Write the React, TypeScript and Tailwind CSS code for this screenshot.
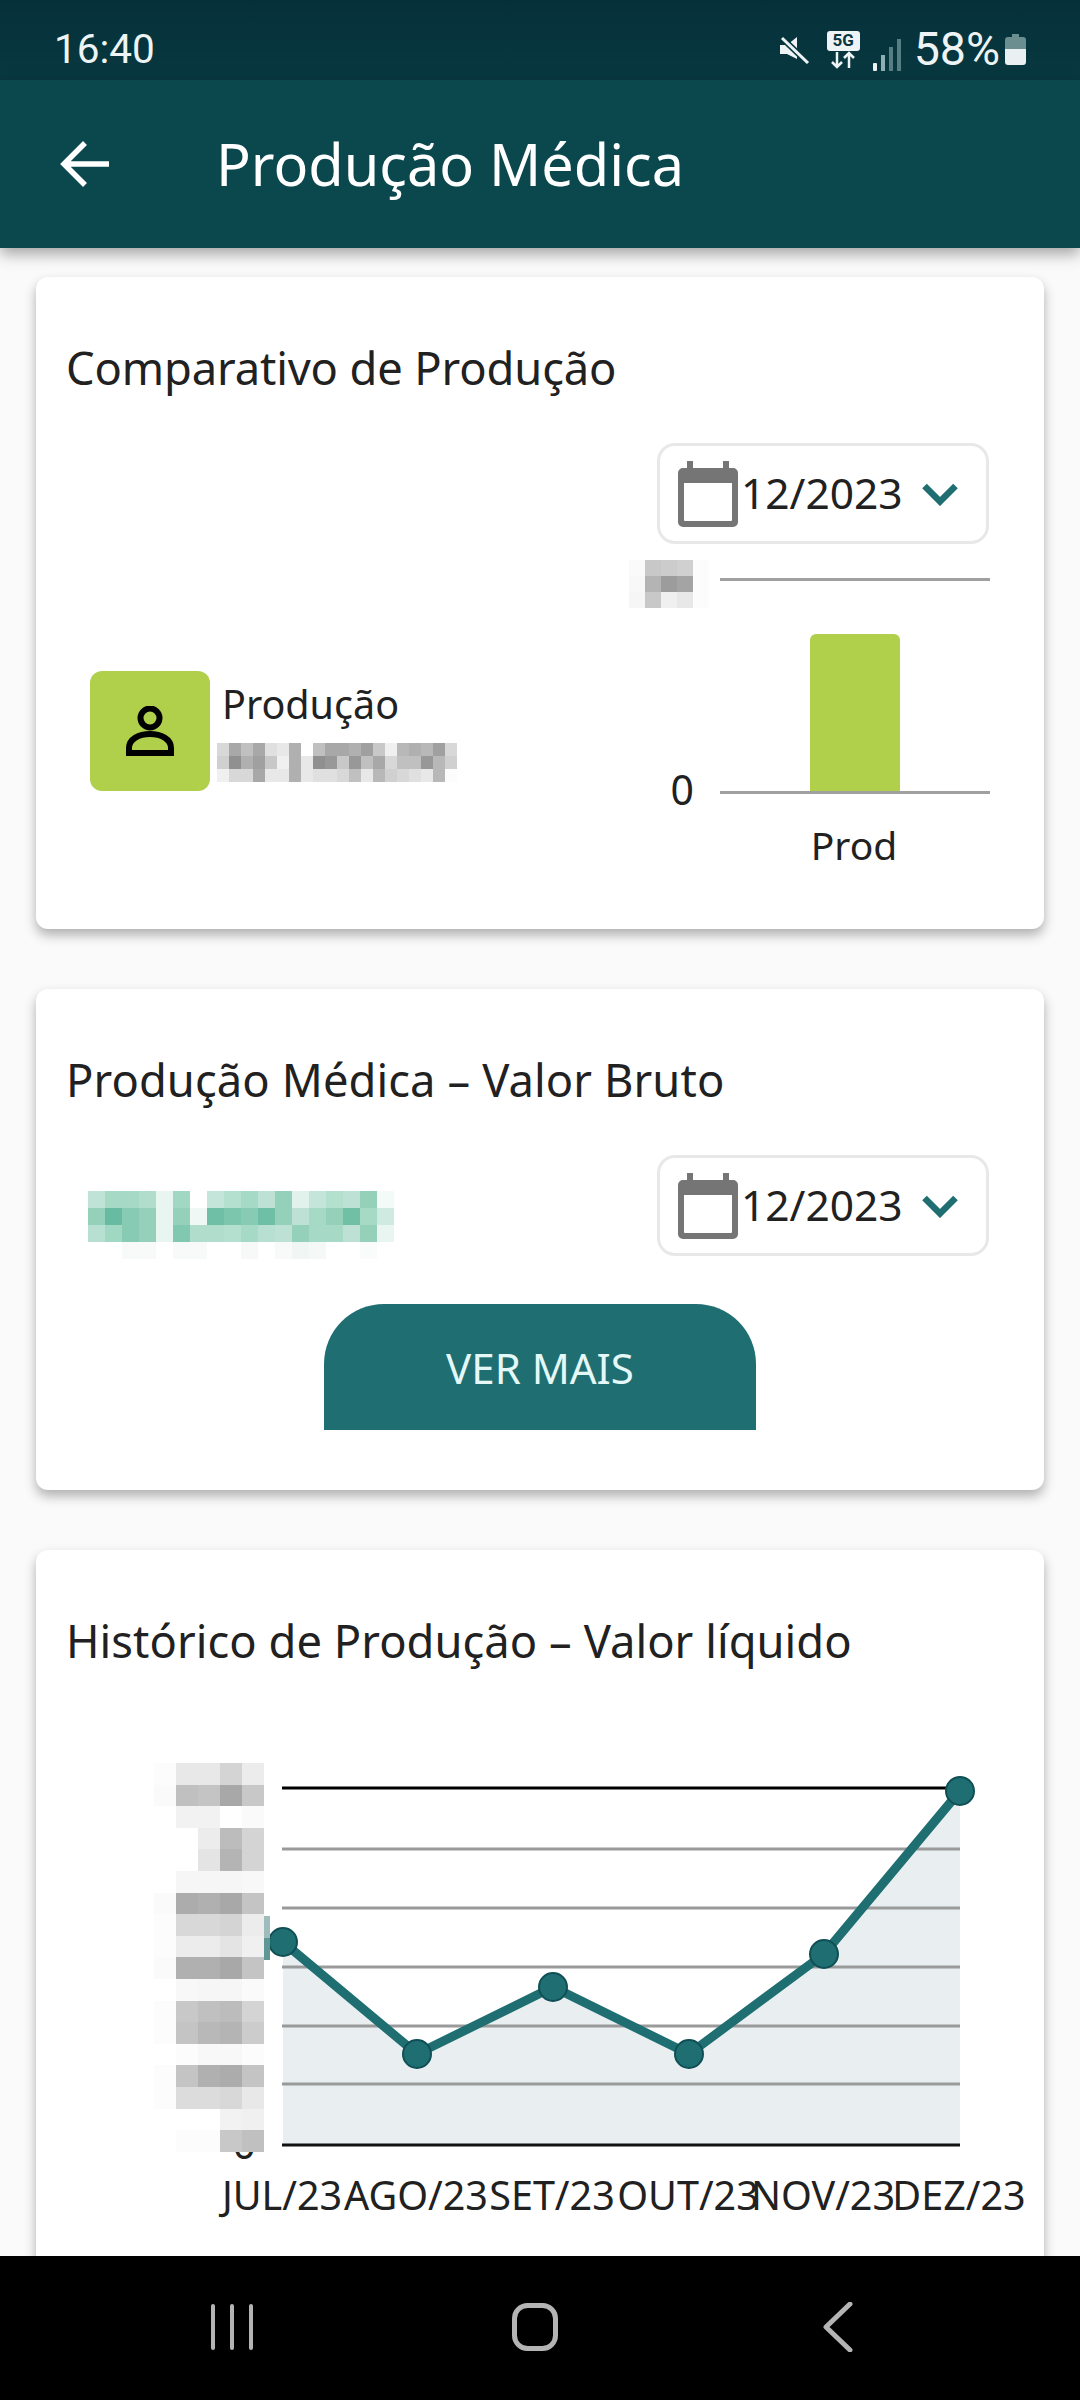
import React from "react";

const font = { fontFamily: '"Noto Sans", "Open Sans", sans-serif' };

function Mosaic({ rows, w, h, className }: { rows: string[][]; w: number; h: number; className?: string }) {
  const cols = Math.max(...rows.map((r) => r.length));
  return (
    <svg width={cols * w} height={rows.length * h} shapeRendering="crispEdges" className={className}>
      {rows.map((r, y) =>
        r.map((c, x) => <rect key={x + "-" + y} x={x * w} y={y * h} width={w} height={h + 0.5} fill={"#" + c} />)
      )}
    </svg>
  );
}

const g = (s: string) =>
  s.split("|").map((row) =>
    row.split(",").map((v) => (v.length === 2 ? v + v + v : v))
  );

const grayRows = g(
  "d8,a8,c0,a8,e0,e8,b0,ff,c0,a8,a8,b0,a0,c8,f0,b8,b0,b8,a0,d8|d0,90,b0,a0,c8,f0,b0,e8,90,98,c8,98,c0,a8,d8,c0,c0,98,b8,d0|f0,d8,d8,a8,e8,e8,b0,e8,e0,e0,d8,c0,e8,b8,d0,d8,e0,e8,b8,fc"
);
const smallRows = g("fa,c8,cc,d0,fc|f8,b4,9c,a4,fc|f6,c8,f0,e8,fc");
const chartRows = g(
  "fc,e8,e8,d4,ec|fa,c0,c4,a8,c8|ff,f2,f2,ff,fa|ff,ff,ec,bc,d4|ff,ff,e4,b4,d4|ff,f6,f6,f6,f8|fa,ac,b0,a8,c4|fc,d8,d8,d4,ec|fc,ec,ec,e4,f0|fa,b0,b0,a8,c4|ff,f8,f6,f6,fa|fc,c8,c0,bc,d4|fc,c4,b8,b4,cc|ff,fc,f8,f8,fc|fc,c4,b0,ac,c4|fc,dc,dc,d8,e8|ff,ff,ff,f2,f0|ff,fc,fc,c8,c0"
);
const greenRows = g(
  "bfe3d6,a6d9c6,a6d9c6,b0ddcc,e8f5f0,a0d8c4,ffffff,c4e6da,b4e0d0,a6d9c6,bde2d5,94d0ba,e0f2eb,c4e6da,b4e0d0,bde2d5,94d0ba,f4faf8|94d0ba,66bba0,88cbb4,94d0ba,e8f5f0,94d0ba,f0f8f5,6ebfa5,7cc6ae,88cbb4,6ebfa5,94d0ba,bde2d5,a6d9c6,94d0ba,70c0a6,a6d9c6,cfeae0|b8e0d2,a0d8c4,88cbb4,94d0ba,e8f5f0,80c8b0,b0ddcc,b0ddcc,b4e0d0,a6d9c6,b8e0d2,bde2d5,94d0ba,a6d9c6,a6d9c6,bde2d5,94d0ba,e8f5f0|ffffff,ffffff,f8fafa,f8fafa,ffffff,f8fafa,f8fafa,ffffff,ffffff,f6f9f8,ffffff,f8fafa,f0f6f3,f4f8f6,ffffff,ffffff,fafbfb,ffffff"
);

function CalendarIcon() {
  return (
    <svg width="60" height="66" viewBox="0 0 60 66" className="shrink-0">
      <path
        fillRule="evenodd"
        fill="#757575"
        d="M9 0h6v7h30V0h6v7h4a5 5 0 0 1 5 5v49a5 5 0 0 1-5 5H5a5 5 0 0 1-5-5V12a5 5 0 0 1 5-5h4zM6 22v37a1 1 0 0 0 1 1h46a1 1 0 0 0 1-1V22z"
      />
    </svg>
  );
}

function DateBox() {
  return (
    <div className="flex h-[101px] w-[332px] items-center rounded-[18px] border-[3px] border-[#e8e8e8] bg-white pl-[18px]">
      <CalendarIcon />
      <span className="ml-[3px] text-[42.500px] leading-none text-[#212121]">12/2023</span>
      <svg width="36" height="24" viewBox="0 0 36 24" className="ml-[19px] shrink-0">
        <path d="M2.500 4L18 19.500 33.500 4" fill="none" stroke="#1f6e72" strokeWidth="6.500" />
      </svg>
    </div>
  );
}

function Card({
  title,
  className,
  titleClass,
  children,
}: {
  title: string;
  className: string;
  titleClass: string;
  children: React.ReactNode;
}) {
  return (
    <section
      className={
        "mx-[36px] shrink-0 rounded-[12px] bg-white pt-[59px] shadow-[0_6px_12px_rgba(0,0,0,0.3)] " + className
      }
    >
      <h2 className={"pl-[30px] text-[45.300px] leading-[64px] text-[#212121] " + titleClass}>{title}</h2>
      {children}
    </section>
  );
}

function StatusBar() {
  return (
    <div className="flex h-[80px] shrink-0 items-center bg-gradient-to-b from-[#05303a] to-[#083840] pl-[54px] pr-[54px] pt-[19px] text-[#eef4f5]">
      <span className="text-[40.500px] leading-none" style={{ fontFamily: "Roboto, sans-serif" }}>
        16:40
      </span>
      <div className="ml-auto flex items-center">
        <svg width="32" height="28" viewBox="0 0 32 28">
          <path d="M1 9h7l10-8v22L8 18H1z" fill="#eef4f5" />
          <path d="M3 2l26 25" stroke="#08363f" strokeWidth="6" />
          <path d="M3 2l26 25" stroke="#eef4f5" strokeWidth="3" />
        </svg>
        <div className="ml-[16px] flex w-[33px] flex-col items-center">
          <div
            className="flex h-[20px] w-[33px] items-center justify-center rounded-[3px] bg-[#eef4f5] text-[17px] font-bold leading-none text-[#08363f]"
            style={{ fontFamily: "Roboto, sans-serif" }}
          >
            5G
          </div>
          <svg width="26" height="18" viewBox="0 0 26 18">
            <path d="M7 1v15M2 11l5 5 5-5M19 17V2M14 7l5-5 5 5" fill="none" stroke="#eef4f5" strokeWidth="2.500" />
          </svg>
        </div>
        <svg width="28" height="32" viewBox="0 0 28 32" className="ml-[13px] self-end mb-[2px]">
          <rect x="0" y="24" width="4" height="8" rx="1" fill="#eef4f5" />
          <rect x="8" y="16" width="4" height="16" fill="#8fb0b2" />
          <rect x="16" y="8" width="4" height="24" fill="#557f82" />
          <rect x="24" y="0" width="4" height="32" fill="#557f82" />
        </svg>
        <span className="ml-[13px] text-[46.500px] leading-none" style={{ fontFamily: "Roboto, sans-serif" }}>
          58%
        </span>
        <svg width="21" height="31" viewBox="0 0 21 31" className="ml-[5px]">
          <path d="M7 0h7v3h4a3 3 0 0 1 3 3v9H0V6a3 3 0 0 1 3-3h4z" fill="#6b8f90" />
          <path d="M0 15h21v13a3 3 0 0 1-3 3H3a3 3 0 0 1-3-3z" fill="#eaf0f2" />
        </svg>
      </div>
    </div>
  );
}

function Header() {
  return (
    <header className="relative z-10 flex h-[168px] shrink-0 items-center bg-[#0b484e] pl-[60px] shadow-[0_6px_14px_rgba(0,0,0,0.35)]">
      <svg width="50" height="46" viewBox="0 0 50 46">
        <path d="M49 23H4M25 2L4 23l21 21" fill="none" stroke="#ffffff" strokeWidth="5.500" />
      </svg>
      <h1 className="ml-[106px] text-[57.600px] leading-none text-white">Produção Médica</h1>
    </header>
  );
}

function PersonIcon() {
  return (
    <svg width="48" height="50" viewBox="0 0 48 50">
      <circle cx="24" cy="12" r="9.500" fill="none" stroke="#000" strokeWidth="6" />
      <path d="M3 47v-5C3 33 13 28 24 28s21 5 21 14v5z" fill="none" stroke="#000" strokeWidth="6" />
    </svg>
  );
}

function BarChart() {
  return (
    <div className="relative -mr-[1px] mt-[11px] h-[320px] w-[346px]">
      <svg width="346" height="320" className="block">
        <path d="M76 24.500h270M76 237.500h270" stroke="#a0a0a0" strokeWidth="3" />
        <path d="M166 236V85a6 6 0 0 1 6-6h78a6 6 0 0 1 6 6v151z" fill="#b0d04c" />
        <text x="50" y="250" textAnchor="end" fontSize="41" fill="#212121">
          0
        </text>
        <text x="210" y="305" textAnchor="middle" fontSize="39" fill="#212121">
          Prod
        </text>
      </svg>
      <Mosaic rows={smallRows} w={16} h={16} className="absolute -left-[15px] top-[5px]" />
    </div>
  );
}

const points: [number, number][] = [
  [123, 192],
  [257, 304],
  [393, 237],
  [529, 304],
  [664, 204],
  [800, 41],
];

function LineChart() {
  const line = points.map((p) => p.join(",")).join(" ");
  const area = "123,395 " + line + " 800,395";
  const labels = ["JUL/23", "AGO/23", "SET/23", "OUT/23", "NOV/23", "DEZ/23"];
  return (
    <div className="relative ml-[124px] mt-[77px] h-[490px] w-[880px]">
      <svg width="880" height="490" className="block" viewBox="0 0 880 490">
        <text x="96" y="409" textAnchor="end" fontSize="41" fill="#212121">
          0
        </text>
        <polygon points={area} fill="#e9eff1" />
        {[99, 158, 217, 276, 334].map((y) => (
          <line key={y} x1="122" x2="800" y1={y} y2={y} stroke="#9a9a9a" strokeWidth="3" />
        ))}
        <line x1="122" x2="800" y1="38" y2="38" stroke="#000" strokeWidth="3" />
        <line x1="122" x2="800" y1="395" y2="395" stroke="#111" strokeWidth="3" />
        <polyline points={line} fill="none" stroke="#1f6e72" strokeWidth="9" />
        {points.map(([x, y]) => (
          <circle key={x} cx={x} cy={y} r="14" fill="#1f6e72" stroke="#0f4f55" strokeWidth="2" />
        ))}
        {labels.map((l, i) => (
          <text key={l} x={points[i][0] - 1} y="460" textAnchor="middle" fontSize="39.500" fill="#212121">
            {l}
          </text>
        ))}
      </svg>
      <Mosaic rows={chartRows} w={22} h={21.6} className="absolute -left-[6px] top-[13px]" />
      <div className="absolute left-[104px] top-[166px] h-[22px] w-[6px] bg-[#9fbcbc]" />
      <div className="absolute left-[104px] top-[188px] h-[22px] w-[6px] bg-[#5f9696]" />
    </div>
  );
}

function NavBar() {
  return (
    <nav className="flex h-[144px] shrink-0 items-center justify-center bg-black pb-[2px] pr-[10px]">
      <div className="flex w-[303px] justify-center">
        <svg width="44" height="46" viewBox="0 0 44 46">
          <path d="M3 2v42M22 2v42M41 2v42" stroke="#b4b4b4" strokeWidth="4" strokeLinecap="round" />
        </svg>
      </div>
      <div className="flex w-[303px] justify-center">
        <svg width="46" height="48" viewBox="0 0 46 48">
          <rect x="2.500" y="2.500" width="41" height="43" rx="13" fill="none" stroke="#b4b4b4" strokeWidth="5" />
        </svg>
      </div>
      <div className="flex w-[303px] justify-center">
        <svg width="30" height="50" viewBox="0 0 30 50">
          <path d="M27 2L3 25l24 23" fill="none" stroke="#b4b4b4" strokeWidth="5" strokeLinecap="round" strokeLinejoin="round" />
        </svg>
      </div>
    </nav>
  );
}

export default function App() {
  return (
    <div className="flex h-[2400px] w-[1080px] flex-col overflow-hidden bg-[#fafafa]" style={font}>
      <StatusBar />
      <Header />
      <main className="flex min-h-0 flex-1 flex-col gap-[60px] overflow-hidden pt-[29px]">
        <Card title="Comparativo de Produção" className="h-[652px]" titleClass="tracking-[-0.13px]">
          <div className="mt-[43px] flex justify-between pl-[54px] pr-[55px]">
            <div className="mt-[228px] flex h-[120px] items-center">
              <div className="flex h-[120px] w-[120px] items-center justify-center rounded-[12px] bg-[#b0d04c]">
                <PersonIcon />
              </div>
              <div className="ml-[12px] flex flex-col">
                <span className="-mt-[2px] text-[39.500px] leading-[50px] text-[#212121]">Produção</span>
                <Mosaic rows={grayRows} w={12} h={13} className="-ml-[5px] mt-[14px]" />
              </div>
            </div>
            <div className="-ml-[12px] flex flex-col items-end">
              <DateBox />
              <BarChart />
            </div>
          </div>
        </Card>
        <Card title="Produção Médica – Valor Bruto" className="h-[501px]" titleClass="tracking-[0.1px]">
          <div className="mt-[43px] flex items-start justify-between pl-[52px] pr-[55px]">
            <Mosaic rows={greenRows} w={17} h={17} className="mt-[36px]" />
            <DateBox />
          </div>
          <div className="mt-[45px] flex justify-center">
            <button className="h-[126px] w-[432px] rounded-t-[60px] bg-[#1f6e72] text-[42px] text-[#e4f8f8]">
              VER MAIS
            </button>
          </div>
        </Card>
        <Card title="Histórico de Produção – Valor líquido" className="h-[800px]" titleClass="tracking-[0.05px]">
          <LineChart />
        </Card>
      </main>
      <NavBar />
    </div>
  );
}
